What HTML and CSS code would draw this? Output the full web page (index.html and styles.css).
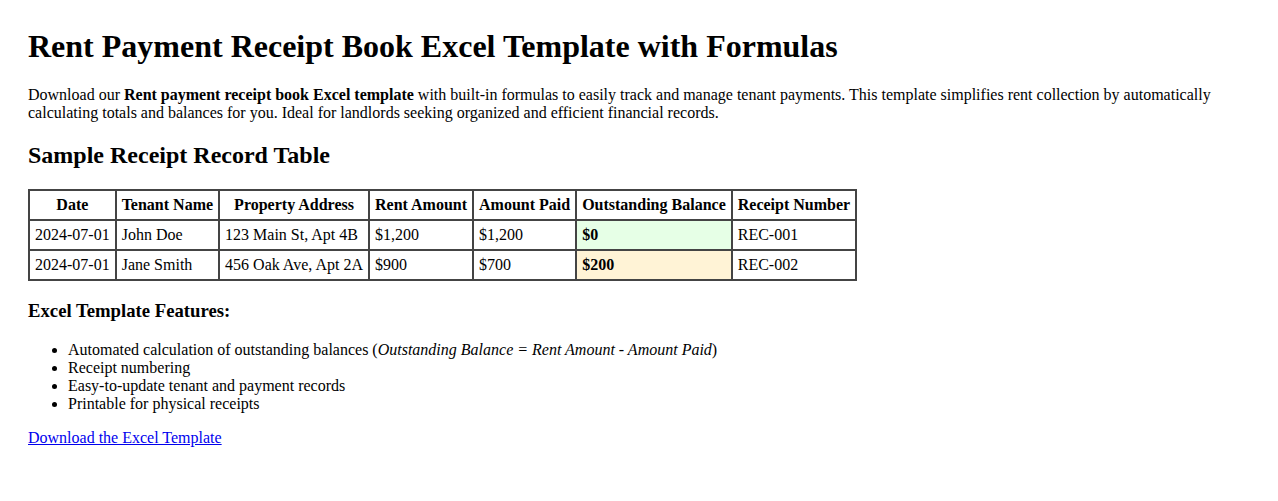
FILE: index.html
```html
<!DOCTYPE html>
<html lang="en">
<head>
<meta charset="utf-8">
<title>Rent Payment Receipt Book Excel Template with Formulas</title>
<link rel="stylesheet" href="styles.css">
</head>
<body>
<div class="page">
  <h1 class="title">Rent Payment Receipt Book Excel Template with Formulas</h1>
  <p class="intro">Download our <strong>Rent payment receipt book Excel template</strong> with built-in formulas to easily track and manage tenant payments. This template simplifies rent collection by automatically calculating totals and balances for you. Ideal for landlords seeking organized and efficient financial records.</p>
  <h2 class="section-title">Sample Receipt Record Table</h2>
  <table class="records">
    <thead>
      <tr>
        <th>Date</th>
        <th>Tenant Name</th>
        <th>Property Address</th>
        <th>Rent Amount</th>
        <th>Amount Paid</th>
        <th>Outstanding Balance</th>
        <th>Receipt Number</th>
      </tr>
    </thead>
    <tbody>
      <tr>
        <td>2024-07-01</td>
        <td>John Doe</td>
        <td>123 Main St, Apt 4B</td>
        <td>$1,200</td>
        <td>$1,200</td>
        <td class="bal bal-paid"><strong>$0</strong></td>
        <td>REC-001</td>
      </tr>
      <tr>
        <td>2024-07-01</td>
        <td>Jane Smith</td>
        <td>456 Oak Ave, Apt 2A</td>
        <td>$900</td>
        <td>$700</td>
        <td class="bal bal-due"><strong>$200</strong></td>
        <td>REC-002</td>
      </tr>
    </tbody>
  </table>
  <h3 class="features-title">Excel Template Features:</h3>
  <ul class="features">
    <li>Automated calculation of outstanding balances (<em>Outstanding Balance = Rent Amount - Amount Paid</em>)</li>
    <li>Receipt numbering</li>
    <li>Easy-to-update tenant and payment records</li>
    <li>Printable for physical receipts</li>
  </ul>
  <p class="download"><a href="#">Download the Excel Template</a></p>
</div>
</body>
</html>
```

FILE: styles.css
```css
body {
  margin: 8px;
  font-family: "Liberation Serif", "Times New Roman", serif;
  font-size: 16px;
  color: #000;
  background: #fff;
}

.page {
  padding: 20px;
}

.title {
  font-size: 32px;
  margin: 0 0 21.44px;
}

.intro {
  margin: 0 0 16px;
}

.section-title {
  font-size: 24px;
  margin: 19.92px 0;
}

.records {
  border-collapse: collapse;
  border: 2px solid #444;
}

.records th,
.records td {
  border: 2px solid #444;
  padding: 5px;
  line-height: normal;
}

.records th {
  text-align: center;
}

.records td {
  text-align: left;
}

.bal-paid {
  background: #e6ffe6;
}

.bal-due {
  background: #fff3d6;
}

.features-title {
  font-size: 18.72px;
  margin: 18.72px 0;
}

.features {
  margin: 16px 0;
  padding-left: 40px;
}

.download {
  margin: 16px 0;
}

.download a {
  color: #0000ee;
}
```
